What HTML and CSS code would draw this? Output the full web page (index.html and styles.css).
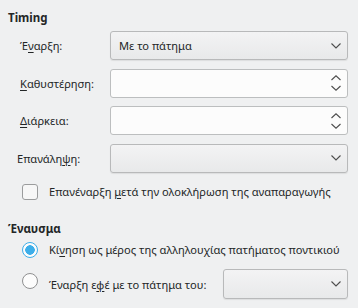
FILE: index.html
```html
<!DOCTYPE html>
<html lang="el">
<head>
<meta charset="utf-8">
<link rel="stylesheet" href="styles.css">
</head>
<body>
<div class="page">
  <div class="title">Timing</div>
  <div class="form">
    <label class="lbl">Έ<u>ν</u>αρξη:</label>
    <div class="combo"><span>Με το πάτημα</span>
      <svg class="chev" width="10" height="6" viewBox="0 0 10 6"><path d="M0.5 0.5 L5 5 L9.5 0.5" fill="none" stroke="#4d4d4d" stroke-width="1.1"/></svg>
    </div>
    <label class="lbl"><u>Κ</u>αθυστέρηση:</label>
    <div class="spin">
      <svg class="spinarr" width="10" height="16" viewBox="0 0 10 16"><path d="M0.5 5 L5 0.8 L9.5 5 M0.5 11 L5 15.2 L9.5 11" fill="none" stroke="#4d4d4d" stroke-width="1.1"/></svg>
    </div>
    <label class="lbl"><u>Δ</u>ιάρκεια:</label>
    <div class="spin">
      <svg class="spinarr" width="10" height="16" viewBox="0 0 10 16"><path d="M0.5 5 L5 0.8 L9.5 5 M0.5 11 L5 15.2 L9.5 11" fill="none" stroke="#4d4d4d" stroke-width="1.1"/></svg>
    </div>
    <label class="lbl lbl-shift">Επανάλη<u>ψ</u>η:</label>
    <div class="combo">
      <svg class="chev" width="10" height="6" viewBox="0 0 10 6"><path d="M0.5 0.5 L5 5 L9.5 0.5" fill="none" stroke="#4d4d4d" stroke-width="1.1"/></svg>
    </div>
  </div>
  <div class="check-row">
    <span class="checkbox"></span>
    <span class="txt">Επανέναρξη <u>μ</u>ετά την ολοκλήρωση της αναπαραγωγής</span>
  </div>
  <div class="title title2">Έναυσμα</div>
  <div class="radio-row">
    <span class="radio on"></span>
    <span class="txt">Κί<u>ν</u>ηση ως μέρος της αλληλουχίας πατήματος ποντικιού</span>
  </div>
  <div class="radio-row radio-row2">
    <span class="radio radio-top"></span>
    <span class="txt radio-text">Έναρξη ε<u>φ</u>έ με το πάτημα του:</span>
    <div class="combo combo-small">
      <svg class="chev" width="10" height="6" viewBox="0 0 10 6"><path d="M0.5 0.5 L5 5 L9.5 0.5" fill="none" stroke="#4d4d4d" stroke-width="1.1"/></svg>
    </div>
  </div>
</div>
</body>
</html>
```
FILE: styles.css
```css
html, body {
  margin: 0;
  padding: 0;
  background: #eff0f1;
}
body {
  font-family: "Noto Sans", "DejaVu Sans", sans-serif;
  font-size: 11.1px;
  color: #232627;
}
u {
  text-decoration-thickness: 1px;
  text-underline-offset: 2px;
}
.page {
  width: 358px;
  height: 308px;
  box-sizing: border-box;
  padding: 9px 10px 0 8px;
}
.title {
  font-weight: bold;
  font-size: 11.5px;
  height: 17px;
  line-height: 17px;
}
.form {
  margin-top: 5px;
  margin-left: 12px;
  display: grid;
  grid-template-columns: 90px 1fr;
  grid-auto-rows: 29px;
  row-gap: 8.5px;
  align-items: center;
}
.lbl, .txt {
  white-space: nowrap;
}
.lbl-shift {
  margin-left: -3px;
}
.combo, .spin {
  height: 29px;
  box-sizing: border-box;
  border-radius: 3px;
  display: flex;
  align-items: center;
  padding: 0 6px 0 8px;
}
.combo {
  border: 1px solid #b8b9ba;
  background: linear-gradient(#f3f3f4, #e8e9ea);
  box-shadow: 0 1px 1px rgba(0,0,0,0.08);
}
.combo span { flex: 1; }
.combo .chev {
  margin-left: auto;
}
.spin {
  background: #fcfcfc;
  border: 1px solid #bcbebf;
}
.spin .spinarr {
  margin-left: auto;
}
.check-row {
  margin-top: 10px;
  margin-left: 14px;
  display: flex;
  align-items: center;
  gap: 11px;
  height: 18px;
}
.checkbox {
  flex: none;
  width: 16px;
  height: 16px;
  box-sizing: border-box;
  border: 1px solid #9b9c9d;
  border-radius: 3px;
  background: #f7f7f7;
}
.title2 {
  margin-top: 19px;
}
.radio-row {
  margin-left: 14px;
  display: flex;
  align-items: center;
  gap: 11px;
  height: 18px;
  margin-top: 4px;
}
.radio-row2 {
  margin-top: 10.5px;
  height: 30px;
}
.radio {
  flex: none;
  width: 16px;
  height: 16px;
  box-sizing: border-box;
  border-radius: 50%;
  border: 1px solid #8f9091;
  background: #fcfcfc;
}
.radio-top {
  align-self: flex-start;
  margin-top: 4px;
}
.radio.on {
  border: 1px solid #3daee9;
  background: radial-gradient(circle, #3daee9 0 4.5px, #fcfcfc 5px);
}
.radio-text {
  width: 163px;
  flex: none;
}
.combo-small {
  flex: 1;
  height: 30px;
}
```
